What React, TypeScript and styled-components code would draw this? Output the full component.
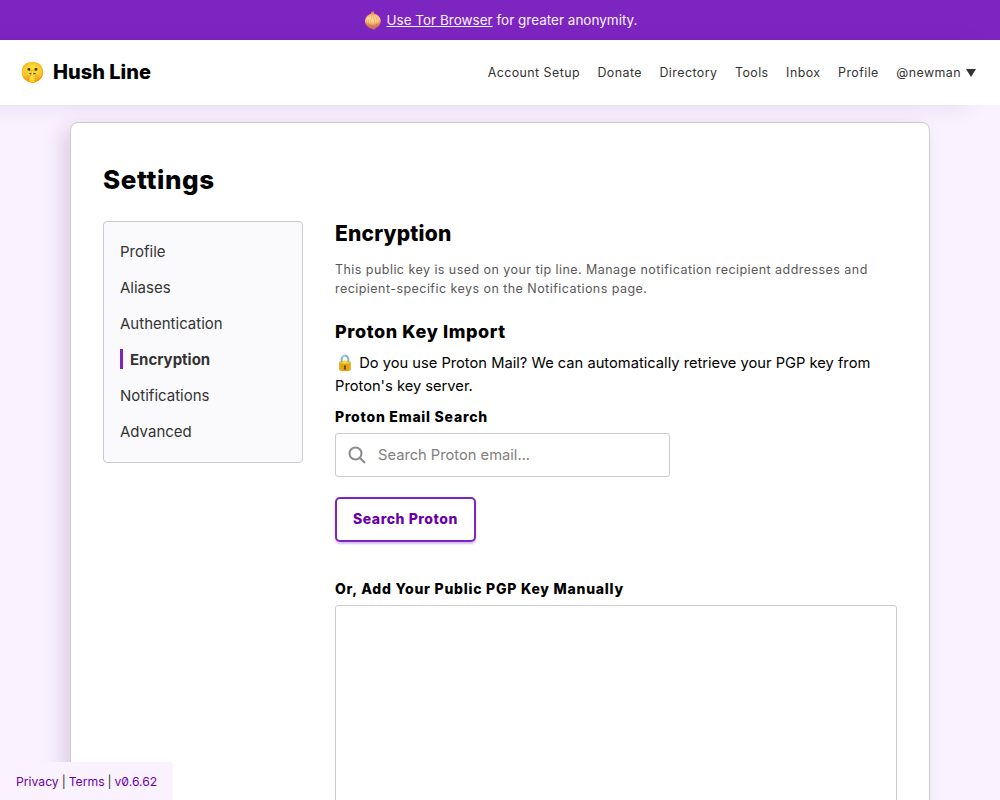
import React from "react";
import styled, { createGlobalStyle } from "styled-components";

const GlobalStyle = createGlobalStyle`
  * { box-sizing: border-box; }
  html, body { margin: 0; padding: 0; }
  body {
    background: #faf2ff;
    font-family: "Inter", "Liberation Sans", sans-serif;
    color: #000;
  }
`;

const Banner = styled.div`
  height: 40px;
  padding-bottom: 1px;
  background: #7d25c1;
  color: #fbf3ff;
  font-size: 13.5px;
  display: flex;
  align-items: center;
  justify-content: center;
  gap: 4px;
  a { color: inherit; }
`;

const BannerEmoji = styled.span`
  font-size: 16px;
`;

const Header = styled.header`
  height: 65px;
  background: #fff;
  display: flex;
  align-items: center;
  justify-content: space-between;
  padding: 0 24px 0 20px;
  box-shadow: -30px 2px 20px rgba(80, 20, 120, 0.1);
  position: relative;
`;

const Logo = styled.div`
  font-size: 20px;
  font-weight: 800;
  display: flex;
  align-items: center;
  gap: 8px;
  padding-bottom: 2px;
`;

const Nav = styled.nav`
  display: flex;
  align-items: center;
  gap: 17.5px;
  font-size: 12.4px;
  letter-spacing: 0.45px;
  color: #333;
`;

const UserMenu = styled.span`
  display: flex;
  align-items: center;
  gap: 5px;
  &::after {
    content: "";
    border-left: 5px solid transparent;
    border-right: 5px solid transparent;
    border-top: 8px solid #333;
  }
`;

const Card = styled.main`
  width: 860px;
  margin: 17px auto 0;
  height: 900px;
  background: #fff;
  border: 1px solid #ccc;
  border-radius: 8px;
  padding: 32px;
  box-shadow: -8px 6px 20px rgba(70, 30, 100, 0.16);
`;

const Title = styled.h1`
  margin: 8px 0 24px;
  font-size: 26px;
  line-height: 34px;
  font-weight: 800;
  letter-spacing: 0.6px;
`;

const Columns = styled.div`
  display: grid;
  grid-template-columns: 200px 1fr;
  gap: 32px;
  align-items: start;
`;

const Sidebar = styled.aside`
  background: #fafafc;
  border: 1px solid #ccc;
  border-radius: 4px;
  padding: 11px 16px 13px;
`;

const SideItem = styled.div<{ $active?: boolean }>`
  height: 36px;
  display: flex;
  align-items: center;
  font-size: 15px;
  color: #333;
  font-weight: ${(p) => (p.$active ? 700 : 400)};
  ${(p) =>
    p.$active &&
    `
    &::before {
      content: "";
      width: 3px;
      height: 20px;
      background: #7d25c1;
      margin-right: 7px;
    }
  `}
`;

const Content = styled.section``;

const Heading = styled.h2`
  margin: 1px 0 0;
  font-size: 21px;
  line-height: 24px;
  font-weight: 800;
  letter-spacing: 0.2px;
`;

const Description = styled.p`
  margin: 14px 0 0;
  font-size: 12.5px;
  line-height: 19px;
  letter-spacing: 0.45px;
  color: #595959;
`;

const SubHeading = styled.h3`
  margin: 22px 0 0;
  font-size: 18px;
  line-height: 24px;
  font-weight: 800;
  letter-spacing: 0.6px;
`;

const Body = styled.p`
  margin: 8px 0 0;
  font-size: 14.7px;
  line-height: 23px;
`;

const LockEmoji = styled.span`
  font-size: 16px;
  line-height: 1;
`;

const FieldLabel = styled.label`
  display: block;
  margin-top: 10px;
  font-size: 14px;
  line-height: 18px;
  font-weight: 800;
  letter-spacing: 0.75px;
`;

const SearchBox = styled.div`
  width: 335px;
  height: 44px;
  margin-top: 7px;
  border: 1px solid #ccc;
  border-radius: 3px;
  display: flex;
  align-items: center;
  gap: 12px;
  padding: 0 12px 1px;
  color: #808080;
  font-size: 14.7px;
`;

const SearchButton = styled.button`
  display: block;
  margin-top: 20px;
  width: 141px;
  height: 45px;
  padding: 0 0 2px;
  background: #fff;
  border: 2px solid #7d25c1;
  border-radius: 5px;
  box-shadow: 0 2px 2px rgba(125, 37, 193, 0.3);
  color: #6a00a8;
  font-family: "Inter", sans-serif;
  font-size: 14px;
  font-weight: 800;
  letter-spacing: 0.55px;
`;

const ManualLabel = styled(FieldLabel)`
  margin-top: 38px;
`;

const KeyArea = styled.textarea`
  display: block;
  width: 100%;
  height: 300px;
  margin-top: 7px;
  border: 1px solid #ccc;
  border-radius: 3px;
  resize: none;
`;

const Footer = styled.footer`
  position: fixed;
  left: 0;
  bottom: 0;
  width: 173px;
  height: 38px;
  background: #faf2ff;
  border-top-right-radius: 4px;
  display: flex;
  align-items: center;
  padding-left: 16px;
  font-size: 12.2px;
  font-feature-settings: "zero";
  word-spacing: -0.5px;
  color: #333;
  white-space: pre;
  span { color: #6a00a8; }
`;

const SearchIcon = () => (
  <svg width="18" height="18" viewBox="0 0 18 18" fill="none" stroke="#8a8a8a" strokeWidth="2">
    <circle cx="7.5" cy="7.5" r="6" />
    <path d="M12 12l5 5" />
  </svg>
);

const sections = ["Profile", "Aliases", "Authentication", "Encryption", "Notifications", "Advanced"];

export default function App() {
  return (
    <>
      <GlobalStyle />
      <Banner>
        <BannerEmoji>🧅</BannerEmoji>
        <span>
          <a href="#">Use Tor Browser</a> for greater anonymity.
        </span>
      </Banner>
      <Header>
        <Logo>
          <span>🤫</span>
          <span>Hush Line</span>
        </Logo>
        <Nav>
          <span>Account Setup</span>
          <span>Donate</span>
          <span>Directory</span>
          <span>Tools</span>
          <span>Inbox</span>
          <span>Profile</span>
          <UserMenu>@newman</UserMenu>
        </Nav>
      </Header>
      <Card>
        <Title>Settings</Title>
        <Columns>
          <Sidebar>
            {sections.map((s) => (
              <SideItem key={s} $active={s === "Encryption"}>
                {s}
              </SideItem>
            ))}
          </Sidebar>
          <Content>
            <Heading>Encryption</Heading>
            <Description>
              This public key is used on your tip line. Manage notification recipient addresses and
              recipient-specific keys on the Notifications page.
            </Description>
            <SubHeading>Proton Key Import</SubHeading>
            <Body>
              <LockEmoji>🔒</LockEmoji> Do you use Proton Mail? We can automatically retrieve your PGP key from Proton's key server.
            </Body>
            <FieldLabel>Proton Email Search</FieldLabel>
            <SearchBox>
              <SearchIcon />
              <span>Search Proton email...</span>
            </SearchBox>
            <SearchButton>Search Proton</SearchButton>
            <ManualLabel>Or, Add Your Public PGP Key Manually</ManualLabel>
            <KeyArea />
          </Content>
        </Columns>
      </Card>
      <Footer>
        <span>Privacy</span> | <span>Terms</span> | <span>v0.6.62</span>
      </Footer>
    </>
  );
}
